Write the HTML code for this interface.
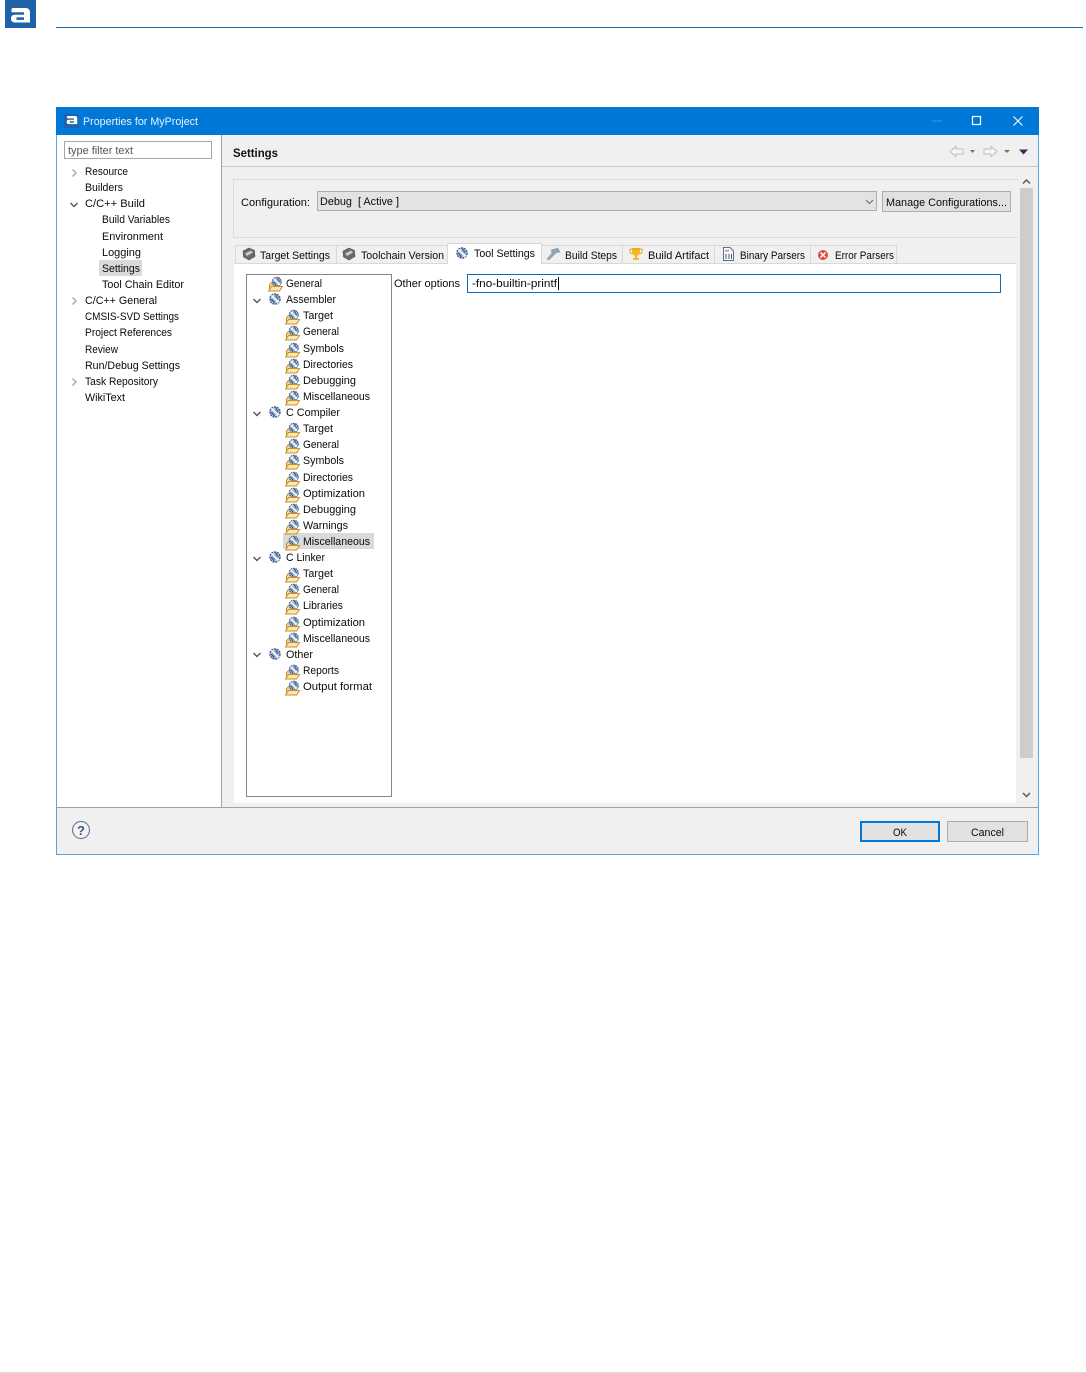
<!DOCTYPE html>
<html><head><meta charset="utf-8"><title>Properties for MyProject</title>
<style>
html,body{margin:0;padding:0;background:#fff}
svg{display:block}
text{font-family:"Liberation Sans",sans-serif;font-size:11px;fill:#0a0a0a}
</style></head><body>
<svg width="1086" height="1373" viewBox="0 0 1086 1373" xmlns="http://www.w3.org/2000/svg">
<defs>
<g id="gear">
<circle cx="6" cy="6" r="5" fill="#c5d2e6" stroke="#3e5f8f" stroke-width="1.500" stroke-dasharray="2 .8"/>
<circle cx="6" cy="6" r="3" fill="#8ea6c8"/>
<path d="M2.500 2.500L9.500 9.500" stroke="#fff" stroke-width="1.600"/>
<path d="M6.500 1.500L9.500 6M2 6L5.500 10" stroke="#2f4f7d" stroke-width="1"/>
</g>
<g id="fold">
<path d="M1.500 15L1.500 9L3 7L7 7L8 8.500L11 8.500L11 15Z" fill="#f6d98f" stroke="#c88a2a"/>
<use href="#gear" transform="translate(3.500 0.500) scale(.88)"/>
<path d="M.5 15L3.500 10.500H14.500L11.500 15Z" fill="#fbe7b0" stroke="#cc8f2c"/>
</g>
<g id="ball">
<path d="M7 1L12.500 3.500L13 9.500L7 13L1.500 10L1 4Z" fill="#6a6a6a" stroke="#555" stroke-width=".6"/>
<path d="M3 6.500L9 3.500L11 5.500L5 9Z" fill="#c9c9c9"/>
</g>
<g id="logo">
<path d="M13 8H25.500Q30 8 30 12.500V22.500H15Q11 22.500 11 18.500Q11 14.800 15 14.800H24V12.300H11.500V9.500Q11.500 8 13 8Z" fill="#fff"/>
<rect x="16.500" y="17.300" width="7.500" height="2.600" fill="#1f62a8"/>
</g>
<path id="cd" d="M-3.500 -2L0 1.500L3.500 -2" fill="none" stroke="#555" stroke-width="1.400"/>
<path id="cr" d="M-1.500 -3.500L2 0L-1.500 3.500" fill="none" stroke="#a6a6a6" stroke-width="1.400"/>
</defs>

<!-- page header -->
<rect x="5" y="0" width="31" height="28" fill="#1f62a8"/>
<use href="#logo"/>
<rect x="56" y="27" width="1027" height="1" fill="#1c68ab"/>
<rect x="0" y="1372" width="1086" height="1" fill="#dcdcdc"/>

<!-- dialog -->
<rect x="56.500" y="107.500" width="982" height="747" fill="#f0f0f0" stroke="#56a4e3"/>
<rect x="56" y="107" width="983" height="28" fill="#0078d7"/>
<rect x="64" y="114" width="15" height="14" fill="#1f62a8"/>
<use href="#logo" transform="translate(60.500 111.500) scale(.56)"/>
<text x="83" y="125" textLength="115" lengthAdjust="spacingAndGlyphs" style="fill:#e9f3fc">Properties for MyProject</text>
<rect x="932" y="120.500" width="10" height="1" fill="#3f9ae3"/>
<rect x="972.500" y="116.500" width="8" height="8" fill="none" stroke="#fff" stroke-width="1.200"/>
<path d="M1013.500 116.500L1022.500 125.500M1022.500 116.500L1013.500 125.500" stroke="#fff" stroke-width="1.100"/>

<!-- left pane -->
<rect x="57" y="135" width="164" height="672" fill="#fff"/>
<rect x="221" y="135" width="1" height="672" fill="#a0a0a0"/>
<rect x="64.500" y="141.500" width="147" height="17" fill="#fff" stroke="#a6a6a6"/>
<text x="68" y="154" textLength="65" lengthAdjust="spacingAndGlyphs" style="fill:#555">type filter text</text>
<use href="#cr" x="74" y="173"/><use href="#cd" x="74" y="205"/><use href="#cr" x="74" y="301"/><use href="#cr" x="74" y="382"/>
<rect x="99" y="260" width="43" height="16" fill="#dadada"/>
<g>
<text x="85" y="175" textLength="43" lengthAdjust="spacingAndGlyphs">Resource</text>
<text x="85" y="191" textLength="38" lengthAdjust="spacingAndGlyphs">Builders</text>
<text x="85" y="207" textLength="60" lengthAdjust="spacingAndGlyphs">C/C++ Build</text>
<text x="102" y="223" textLength="68" lengthAdjust="spacingAndGlyphs">Build Variables</text>
<text x="102" y="240" textLength="61" lengthAdjust="spacingAndGlyphs">Environment</text>
<text x="102" y="256" textLength="39" lengthAdjust="spacingAndGlyphs">Logging</text>
<text x="102" y="272" textLength="38" lengthAdjust="spacingAndGlyphs">Settings</text>
<text x="102" y="288" textLength="82" lengthAdjust="spacingAndGlyphs">Tool Chain Editor</text>
<text x="85" y="304" textLength="72" lengthAdjust="spacingAndGlyphs">C/C++ General</text>
<text x="85" y="320" textLength="94" lengthAdjust="spacingAndGlyphs">CMSIS-SVD Settings</text>
<text x="85" y="336" textLength="87" lengthAdjust="spacingAndGlyphs">Project References</text>
<text x="85" y="353" textLength="33" lengthAdjust="spacingAndGlyphs">Review</text>
<text x="85" y="369" textLength="95" lengthAdjust="spacingAndGlyphs">Run/Debug Settings</text>
<text x="85" y="385" textLength="73" lengthAdjust="spacingAndGlyphs">Task Repository</text>
<text x="85" y="401" textLength="40" lengthAdjust="spacingAndGlyphs">WikiText</text>
</g>

<!-- right header -->
<text x="233" y="157" textLength="45" lengthAdjust="spacingAndGlyphs" style="font-size:12px;font-weight:bold;fill:#111">Settings</text>
<rect x="222" y="166" width="816" height="1" fill="#c8c8c8"/>
<path d="M950 151.500L956 146.500V149H963V154H956V156.500Z" fill="#f6f6f6" stroke="#bdbdbd"/>
<path d="M970 150H975L972.500 153Z" fill="#707070"/>
<path d="M997 151.500L991 146.500V149H984V154H991V156.500Z" fill="#f6f6f6" stroke="#bdbdbd"/>
<path d="M1004 150H1010L1007 153Z" fill="#707070"/>
<path d="M1019 149.500H1028L1023.500 154.500Z" fill="#3b2a55"/>

<!-- configuration group -->
<rect x="233.500" y="179.500" width="785" height="58" fill="#f0f0f0" stroke="#dcdcdc"/>
<text x="241" y="206" textLength="69" lengthAdjust="spacingAndGlyphs">Configuration:</text>
<rect x="317.500" y="191.500" width="559" height="19" fill="#e3e3e3" stroke="#adadad"/>
<text x="320" y="205" textLength="79" lengthAdjust="spacingAndGlyphs">Debug&#160; [ Active ]</text>
<path d="M866 200L869.500 203.500L873 200" fill="none" stroke="#666"/>
<rect x="882.500" y="191.500" width="128" height="20" fill="#e1e1e1" stroke="#adadad"/>
<text x="886" y="206" textLength="121" lengthAdjust="spacingAndGlyphs">Manage Configurations...</text>

<!-- tabs -->
<rect x="234" y="263" width="782" height="540" fill="#fff"/>
<path d="M235.500 263V245.500H336.500V263" fill="#f0f0f0" stroke="#d9d9d9"/>
<path d="M336.500 263V245.500H447.500V263" fill="#f0f0f0" stroke="#d9d9d9"/>
<path d="M541.500 263V245.500H622.500V263" fill="#f0f0f0" stroke="#d9d9d9"/>
<path d="M622.500 263V245.500H714.500V263" fill="#f0f0f0" stroke="#d9d9d9"/>
<path d="M714.500 263V245.500H810.500V263" fill="#f0f0f0" stroke="#d9d9d9"/>
<path d="M810.500 263V245.500H896.500V263" fill="#f0f0f0" stroke="#d9d9d9"/>
<rect x="234" y="263" width="782" height="1" fill="#d9d9d9"/>
<path d="M447.500 264V243.500H541.500V264" fill="#fff" stroke="#d9d9d9"/>
<rect x="448" y="262" width="93" height="3" fill="#fff"/>
<use href="#ball" x="242" y="247"/>
<text x="260" y="259" textLength="70" lengthAdjust="spacingAndGlyphs">Target Settings</text>
<use href="#ball" x="342" y="247"/>
<text x="361" y="259" textLength="83" lengthAdjust="spacingAndGlyphs">Toolchain Version</text>
<use href="#gear" x="456" y="247"/>
<text x="474" y="257" textLength="61" lengthAdjust="spacingAndGlyphs">Tool Settings</text>
<path d="M547 259L552 253L551 250L558 248L560 252L556 253L552 257L549 260Z" fill="#8fa3bb" stroke="#9aa8b8" stroke-width=".6"/>
<text x="565" y="259" textLength="52" lengthAdjust="spacingAndGlyphs">Build Steps</text>
<path d="M632 248H640V252.500Q640 255 637 255.500V258H639V260H633V258H635V255.500Q632 255 632 252.500Z" fill="#f6b81e"/>
<path d="M630 249H642V252Q642 253.500 640 253.500M630 249V252Q630 253.500 632 253.500" fill="none" stroke="#e3a612"/>
<text x="648" y="259" textLength="61" lengthAdjust="spacingAndGlyphs">Build Artifact</text>
<path d="M723.500 247.500H730L733.500 251V260.500H723.500Z" fill="#f4f6f9" stroke="#5f6f8c"/>
<path d="M726 254V259M729 254V259M731.500 254V259" stroke="#45638f"/>
<rect x="725" y="250" width="4" height="1.500" fill="#c8a040"/>
<text x="740" y="259" textLength="65" lengthAdjust="spacingAndGlyphs">Binary Parsers</text>
<circle cx="823" cy="255" r="5" fill="#e2493c"/>
<path d="M820.500 252.500L825.500 257.500M825.500 252.500L820.500 257.500" stroke="#fff" stroke-width="1.500"/>
<text x="835" y="259" textLength="59" lengthAdjust="spacingAndGlyphs">Error Parsers</text>

<!-- settings tree -->
<rect x="246.500" y="274.500" width="145" height="522" fill="#fff" stroke="#85858f"/>
<rect x="283" y="533" width="91" height="16" fill="#dadada"/>
<use href="#cd" x="257" y="301"/><use href="#cd" x="257" y="414"/><use href="#cd" x="257" y="559"/><use href="#cd" x="257" y="655"/>
<use href="#fold" x="268" y="276"/>
<use href="#gear" x="269" y="293"/><use href="#gear" x="269" y="406"/><use href="#gear" x="269" y="551"/><use href="#gear" x="269" y="648"/>
<use href="#fold" x="285" y="309"/><use href="#fold" x="285" y="325"/><use href="#fold" x="285" y="342"/><use href="#fold" x="285" y="358"/><use href="#fold" x="285" y="374"/><use href="#fold" x="285" y="390"/>
<use href="#fold" x="285" y="422"/><use href="#fold" x="285" y="438"/><use href="#fold" x="285" y="454"/><use href="#fold" x="285" y="471"/><use href="#fold" x="285" y="487"/><use href="#fold" x="285" y="503"/><use href="#fold" x="285" y="519"/><use href="#fold" x="285" y="535"/>
<use href="#fold" x="285" y="567"/><use href="#fold" x="285" y="583"/><use href="#fold" x="285" y="599"/><use href="#fold" x="285" y="616"/><use href="#fold" x="285" y="632"/>
<use href="#fold" x="285" y="664"/><use href="#fold" x="285" y="680"/>
<g>
<text x="286" y="287" textLength="36" lengthAdjust="spacingAndGlyphs">General</text>
<text x="286" y="303" textLength="50" lengthAdjust="spacingAndGlyphs">Assembler</text>
<text x="303" y="319" textLength="30" lengthAdjust="spacingAndGlyphs">Target</text>
<text x="303" y="335" textLength="36" lengthAdjust="spacingAndGlyphs">General</text>
<text x="303" y="352" textLength="41" lengthAdjust="spacingAndGlyphs">Symbols</text>
<text x="303" y="368" textLength="50" lengthAdjust="spacingAndGlyphs">Directories</text>
<text x="303" y="384" textLength="53" lengthAdjust="spacingAndGlyphs">Debugging</text>
<text x="303" y="400" textLength="67" lengthAdjust="spacingAndGlyphs">Miscellaneous</text>
<text x="286" y="416" textLength="54" lengthAdjust="spacingAndGlyphs">C Compiler</text>
<text x="303" y="432" textLength="30" lengthAdjust="spacingAndGlyphs">Target</text>
<text x="303" y="448" textLength="36" lengthAdjust="spacingAndGlyphs">General</text>
<text x="303" y="464" textLength="41" lengthAdjust="spacingAndGlyphs">Symbols</text>
<text x="303" y="481" textLength="50" lengthAdjust="spacingAndGlyphs">Directories</text>
<text x="303" y="497" textLength="62" lengthAdjust="spacingAndGlyphs">Optimization</text>
<text x="303" y="513" textLength="53" lengthAdjust="spacingAndGlyphs">Debugging</text>
<text x="303" y="529" textLength="45" lengthAdjust="spacingAndGlyphs">Warnings</text>
<text x="303" y="545" textLength="67" lengthAdjust="spacingAndGlyphs">Miscellaneous</text>
<text x="286" y="561" textLength="39" lengthAdjust="spacingAndGlyphs">C Linker</text>
<text x="303" y="577" textLength="30" lengthAdjust="spacingAndGlyphs">Target</text>
<text x="303" y="593" textLength="36" lengthAdjust="spacingAndGlyphs">General</text>
<text x="303" y="609" textLength="40" lengthAdjust="spacingAndGlyphs">Libraries</text>
<text x="303" y="626" textLength="62" lengthAdjust="spacingAndGlyphs">Optimization</text>
<text x="303" y="642" textLength="67" lengthAdjust="spacingAndGlyphs">Miscellaneous</text>
<text x="286" y="658" textLength="27" lengthAdjust="spacingAndGlyphs">Other</text>
<text x="303" y="674" textLength="36" lengthAdjust="spacingAndGlyphs">Reports</text>
<text x="303" y="690" textLength="69" lengthAdjust="spacingAndGlyphs">Output format</text>
</g>

<!-- other options -->
<text x="394" y="287" textLength="66" lengthAdjust="spacingAndGlyphs">Other options</text>
<rect x="467.500" y="274.500" width="533" height="18" fill="#fff" stroke="#0b6cbd"/>
<text x="472" y="287" textLength="85" lengthAdjust="spacingAndGlyphs">-fno-builtin-printf</text>
<rect x="558" y="277" width="1" height="13" fill="#000"/>

<!-- scrollbar -->
<rect x="1018" y="167" width="20" height="640" fill="#f0f0f0"/>
<path d="M1023 183.500L1026.500 180L1030 183.500" fill="none" stroke="#555" stroke-width="1.400"/>
<rect x="1020" y="188" width="13" height="570" fill="#cdcdcd"/>
<path d="M1023 793L1026.500 796.500L1030 793" fill="none" stroke="#555" stroke-width="1.400"/>

<!-- footer -->
<rect x="57" y="807" width="981" height="1" fill="#a0a0a0"/>
<circle cx="81" cy="830" r="8.500" fill="#f4f4f6" stroke="#6d7f99" stroke-width="1.200"/>
<text x="81" y="835" text-anchor="middle" style="font-size:13px;font-weight:bold;fill:#3f5478">?</text>
<rect x="861" y="822" width="78" height="19" fill="#e1e1e1" stroke="#0078d7" stroke-width="2"/>
<text x="893" y="836" textLength="14" lengthAdjust="spacingAndGlyphs">OK</text>
<rect x="947.500" y="821.500" width="80" height="20" fill="#e1e1e1" stroke="#adadad"/>
<text x="971" y="836" textLength="33" lengthAdjust="spacingAndGlyphs">Cancel</text>
</svg>
</body></html>
